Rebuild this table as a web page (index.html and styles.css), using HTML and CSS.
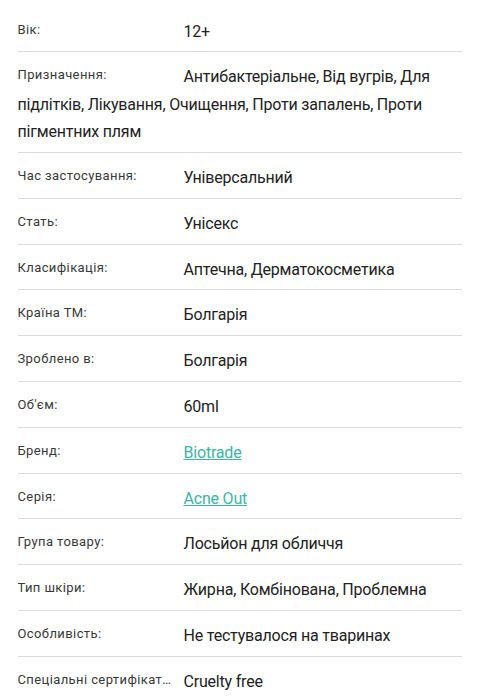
FILE: index.html
```html
<!DOCTYPE html>
<html lang="uk">
<head>
<meta charset="utf-8">
<link rel="stylesheet" href="styles.css">
</head>
<body>
<div class="specs">
  <div class="row"><span class="label">Вік:</span><span class="value">12+</span></div>
  <div class="row"><span class="label">Призначення:</span><span class="value">Антибактеріальне, Від вугрів, Для підлітків, Лікування, Очищення, Проти запалень, Проти пігментних плям</span></div>
  <div class="row"><span class="label">Час застосування:</span><span class="value">Універсальний</span></div>
  <div class="row"><span class="label">Стать:</span><span class="value">Унісекс</span></div>
  <div class="row"><span class="label">Класифікація:</span><span class="value">Аптечна, Дерматокосметика</span></div>
  <div class="row"><span class="label">Країна ТМ:</span><span class="value">Болгарія</span></div>
  <div class="row"><span class="label">Зроблено в:</span><span class="value">Болгарія</span></div>
  <div class="row"><span class="label">Об'єм:</span><span class="value">60ml</span></div>
  <div class="row"><span class="label">Бренд:</span><a class="value link" href="#">Biotrade</a></div>
  <div class="row"><span class="label">Серія:</span><a class="value link" href="#">Acne Out</a></div>
  <div class="row"><span class="label">Група товару:</span><span class="value">Лосьйон для обличчя</span></div>
  <div class="row"><span class="label">Тип шкіри:</span><span class="value">Жирна, Комбінована, Проблемна</span></div>
  <div class="row"><span class="label">Особливість:</span><span class="value">Не тестувалося на тваринах</span></div>
  <div class="row last"><span class="label">Спеціальні сертифікати:</span><span class="value">Cruelty free</span></div>
</div>
</body>
</html>
```
FILE: styles.css
```css
html, body {
  margin: 0;
  padding: 0;
  background: #fff;
}
body {
  font-family: Roboto, "Noto Sans", sans-serif;
  color: #222;
}
.specs {
  padding: 6.5px 18px 0 17.5px;
}
.row {
  padding: 11px 0 6.3px;
  border-bottom: 1px solid #dcdcdc;
  font-size: 16px;
  line-height: 27.5px;
  letter-spacing: -0.2px;
}
.row.last {
  border-bottom: none;
}
.row::after {
  content: "";
  display: block;
  clear: both;
}
.label {
  float: left;
  width: 155px;
  margin-right: 11px;
  font-size: 13px;
  letter-spacing: 0.4px;
  line-height: 24px;
  color: #383838;
  white-space: nowrap;
  overflow: hidden;
  text-overflow: ellipsis;
}
.value {
  color: #222;
}
.link {
  color: #3cb5a2;
  text-decoration: underline;
}
```
